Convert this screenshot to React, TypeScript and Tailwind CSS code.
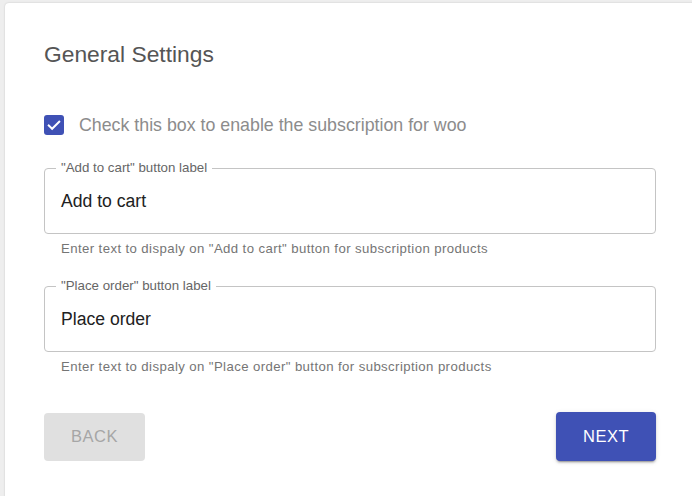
import React from "react";

function Field({ label, value, helper }: { label: string; value: string; helper: string }) {
  return (
    <div className="flex flex-col">
      <div className="relative h-[66px] w-[612px] rounded-[4px] border border-[#c4c4c4] flex items-center pl-[16px]">
        <span className="absolute left-[11px] top-[-9px] bg-white px-[5px] text-[13.3px] leading-[16px] text-[#666666]">
          {label}
        </span>
        <span className="text-[17.6px] leading-[24px] text-[#212121]">{value}</span>
      </div>
      <p className="ml-[17px] mt-[5px] text-[13.2px] leading-[20px] tracking-[0.4px] text-[#757575]">{helper}</p>
    </div>
  );
}

export default function App() {
  return (
    <div
      className="w-[692px] h-[496px] overflow-hidden bg-[#eeeeee] pt-[3px] pl-[5px]"
      style={{ fontFamily: "'Liberation Sans', Arial, sans-serif" }}
    >
      <div className="h-[520px] w-[720px] rounded-tl-[4px] bg-white shadow-[0_0_2px_rgba(0,0,0,0.18)] pl-[39px] pt-[35px]">
        <h1 className="text-[22.8px] leading-[32px] font-normal text-[#555555]">General Settings</h1>

        <div className="mt-[34px] flex h-[42px] items-center">
          <div className="flex h-[20px] w-[20px] items-center justify-center rounded-[3px] bg-[#3f51b5]">
            <svg viewBox="0 0 24 24" width="18" height="18" fill="none">
              <path d="M5 12.5l4.5 4.5L19 7.5" stroke="white" strokeWidth="2.6" strokeLinecap="square" />
            </svg>
          </div>
          <span className="ml-[15px] text-[17.8px] leading-[24px] text-[#8c8c8c]">
            Check this box to enable the subscription for woo
          </span>
        </div>

        <div className="mt-[22px]">
          <Field
            label={'"Add to cart" button label'}
            value="Add to cart"
            helper={'Enter text to dispaly on "Add to cart" button for subscription products'}
          />
        </div>
        <div className="mt-[27px]">
          <Field
            label={'"Place order" button label'}
            value="Place order"
            helper={'Enter text to dispaly on "Place order" button for subscription products'}
          />
        </div>

        <div className="mt-[35px] flex w-[612px] items-center justify-between">
          <button className="h-[48px] w-[101px] rounded-[4px] bg-[#e0e0e0] text-[16.5px] tracking-[0.5px] text-[#a6a6a6]">
            BACK
          </button>
          <button className="h-[49px] w-[100px] rounded-[4px] bg-[#3f51b5] text-[16.5px] tracking-[0.5px] text-white shadow-[0_3px_1px_-2px_rgba(0,0,0,0.2),0_2px_2px_0_rgba(0,0,0,0.14),0_1px_5px_0_rgba(0,0,0,0.12)]">
            NEXT
          </button>
        </div>
      </div>
    </div>
  );
}
